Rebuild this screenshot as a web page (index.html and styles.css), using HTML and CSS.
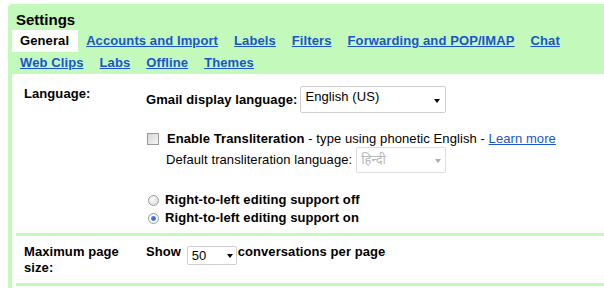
FILE: index.html
```html
<!DOCTYPE html>
<html lang="en">

<head>
  <meta charset="utf-8" />
  <title>Settings</title>
  <link rel="stylesheet" href="styles.css">
</head>

<body>
  <div class="settings">
    <div class="title">Settings</div>
    <div class="tabs">
      <div class="tab-row">
        <span class="tab current">General</span>
        <a class="tab" href="#">Accounts and Import</a>
        <a class="tab" href="#">Labels</a>
        <a class="tab" href="#">Filters</a>
        <a class="tab" href="#">Forwarding and POP/IMAP</a>
        <a class="tab" href="#">Chat</a>
      </div>
      <div class="tab-row">
        <a class="tab" href="#">Web Clips</a>
        <a class="tab" href="#">Labs</a>
        <a class="tab" href="#">Offline</a>
        <a class="tab" href="#">Themes</a>
      </div>
    </div>
    <div class="content">
      <table class="prefs">
        <tr class="pref pref-lang">
          <td class="pref-label">Language:</td>
          <td class="pref-value">
            <div class="line line-display">
              <b>Gmail display language:</b>
              <span class="dropdown dropdown-lang"><select><option>English (US)</option></select></span>
            </div>
            <div class="line line-check">
              <input type="checkbox" class="check">
              <span><b>Enable Transliteration</b> - type using phonetic English - <a href="#" class="more">Learn more</a></span>
            </div>
            <div class="line line-translit">
              Default transliteration language:
              <span class="dropdown dropdown-translit disabled"><select disabled><option>हिन्दी</option></select></span>
            </div>
            <div class="radios">
              <label class="radio-line"><input type="radio" name="rtl" class="radio"> Right-to-left editing support off</label>
              <label class="radio-line"><input type="radio" name="rtl" class="radio" checked> Right-to-left editing support on</label>
            </div>
          </td>
        </tr>
        <tr class="pref pref-size">
          <td class="pref-label">Maximum page size:</td>
          <td class="pref-value">
            <b>Show</b>
            <span class="dropdown dropdown-size"><select><option>50</option></select></span><b>conversations per page</b>
          </td>
        </tr>
      </table>
    </div>
  </div>
</body>

</html>
```

FILE: styles.css
```css
html,
body {
  margin: 0;
  padding: 0;
  background-color: #fff;
  font-family: "Liberation Sans", Arial, "Noto Sans", sans-serif;
  font-size: 13px;
  letter-spacing: 0.08px;
  color: #000;
}

.settings {
  margin: 4px 0 0 8px;
  padding-left: 4px;
  background-color: #c3f9bb;
  border-top-left-radius: 4px;
  min-height: 284px;
}

.title {
  padding: 7px 0 1px 4px;
  font-size: 15px;
  font-weight: bold;
  line-height: 18px;
  letter-spacing: 0;
}

.tab-row {
  display: flex;
  height: 22px;
  line-height: 22px;
  font-weight: bold;
  letter-spacing: 0.1px;
  white-space: nowrap;
}

.tab {
  padding: 0 8px;
  color: #1a55cc;
  text-decoration: underline;
}

.tab.current {
  padding-right: 9px;
  background-color: #fff;
  color: #000;
  text-decoration: none;
}

.content {
  background-color: #fff;
  padding-left: 4px;
  min-height: 214px;
}

.prefs {
  width: 100%;
  border-collapse: collapse;
}

.pref td {
  border-bottom: 3px solid #c3f9bb;
  vertical-align: top;
  line-height: 16px;
}

.pref-label {
  width: 114px;
  padding: 12px 8px 6px 8px;
  font-weight: bold;
}

.pref-value {
  padding: 12px 0 6px 0;
  white-space: nowrap;
}

.pref-size .pref-label,
.pref-size .pref-value {
  padding-top: 8px;
  padding-bottom: 7px;
}

.line {
  display: flex;
  align-items: center;
}

.line-display {
  gap: 3px;
}

.line-check {
  margin-top: 18px;
  gap: 8px;
}

.line-translit {
  padding-left: 20px;
  gap: 4px;
}

.more {
  color: #1a55cc;
}

.check {
  appearance: none;
  margin: 0 0 0 1px;
  width: 12px;
  height: 12px;
  border: 1px solid #9a9a9a;
  background: linear-gradient(135deg, #d6d6d6, #f6f6f6);
}

.radios {
  margin-top: 18px;
  font-weight: bold;
  line-height: 18px;
}

.radio-line {
  display: flex;
  align-items: center;
  gap: 6px;
  padding-left: 2px;
}

.radio {
  appearance: none;
  margin: 0;
  width: 11px;
  height: 11px;
  border: 1px solid #9c9c9c;
  border-radius: 50%;
  background: radial-gradient(circle at 35% 35%, #fdfdfd, #d4d4d4);
}

.radio:checked {
  background: radial-gradient(circle, #1f5fd6 0, #4a86e8 2px, #fff 3px, #e4e4e4 100%);
}

.dropdown {
  position: relative;
  display: inline-block;
}

.dropdown select {
  appearance: none;
  margin: 0;
  border: 1px solid #cfcfcf;
  border-radius: 2px;
  background-color: #fff;
  font-family: inherit;
  font-size: 13px;
  letter-spacing: 0.08px;
  color: #000;
  padding: 0 4px;
}

.dropdown::after {
  content: "";
  position: absolute;
  right: 7px;
  border-left: 3.5px solid transparent;
  border-right: 3.5px solid transparent;
  border-top: 4px solid #000;
}

.dropdown-lang select {
  width: 146px;
  height: 27px;
  padding-bottom: 6px;
}

.dropdown-lang::after {
  top: 13px;
  right: 6px;
}

.dropdown-translit select {
  width: 90px;
  height: 26px;
  color: #999;
  font-family: "Noto Sans Devanagari", "Noto Sans", "Liberation Sans", sans-serif;
}

.dropdown-translit::after {
  top: 12px;
  right: 5px;
  border-top-color: #aaa;
}

.dropdown-size {
  margin: 0 1px 0 2px;
  vertical-align: -4px;
}

.dropdown-size select {
  width: 50px;
  height: 19px;
}

.dropdown-size::after {
  top: 8px;
  right: 4px;
}
```
